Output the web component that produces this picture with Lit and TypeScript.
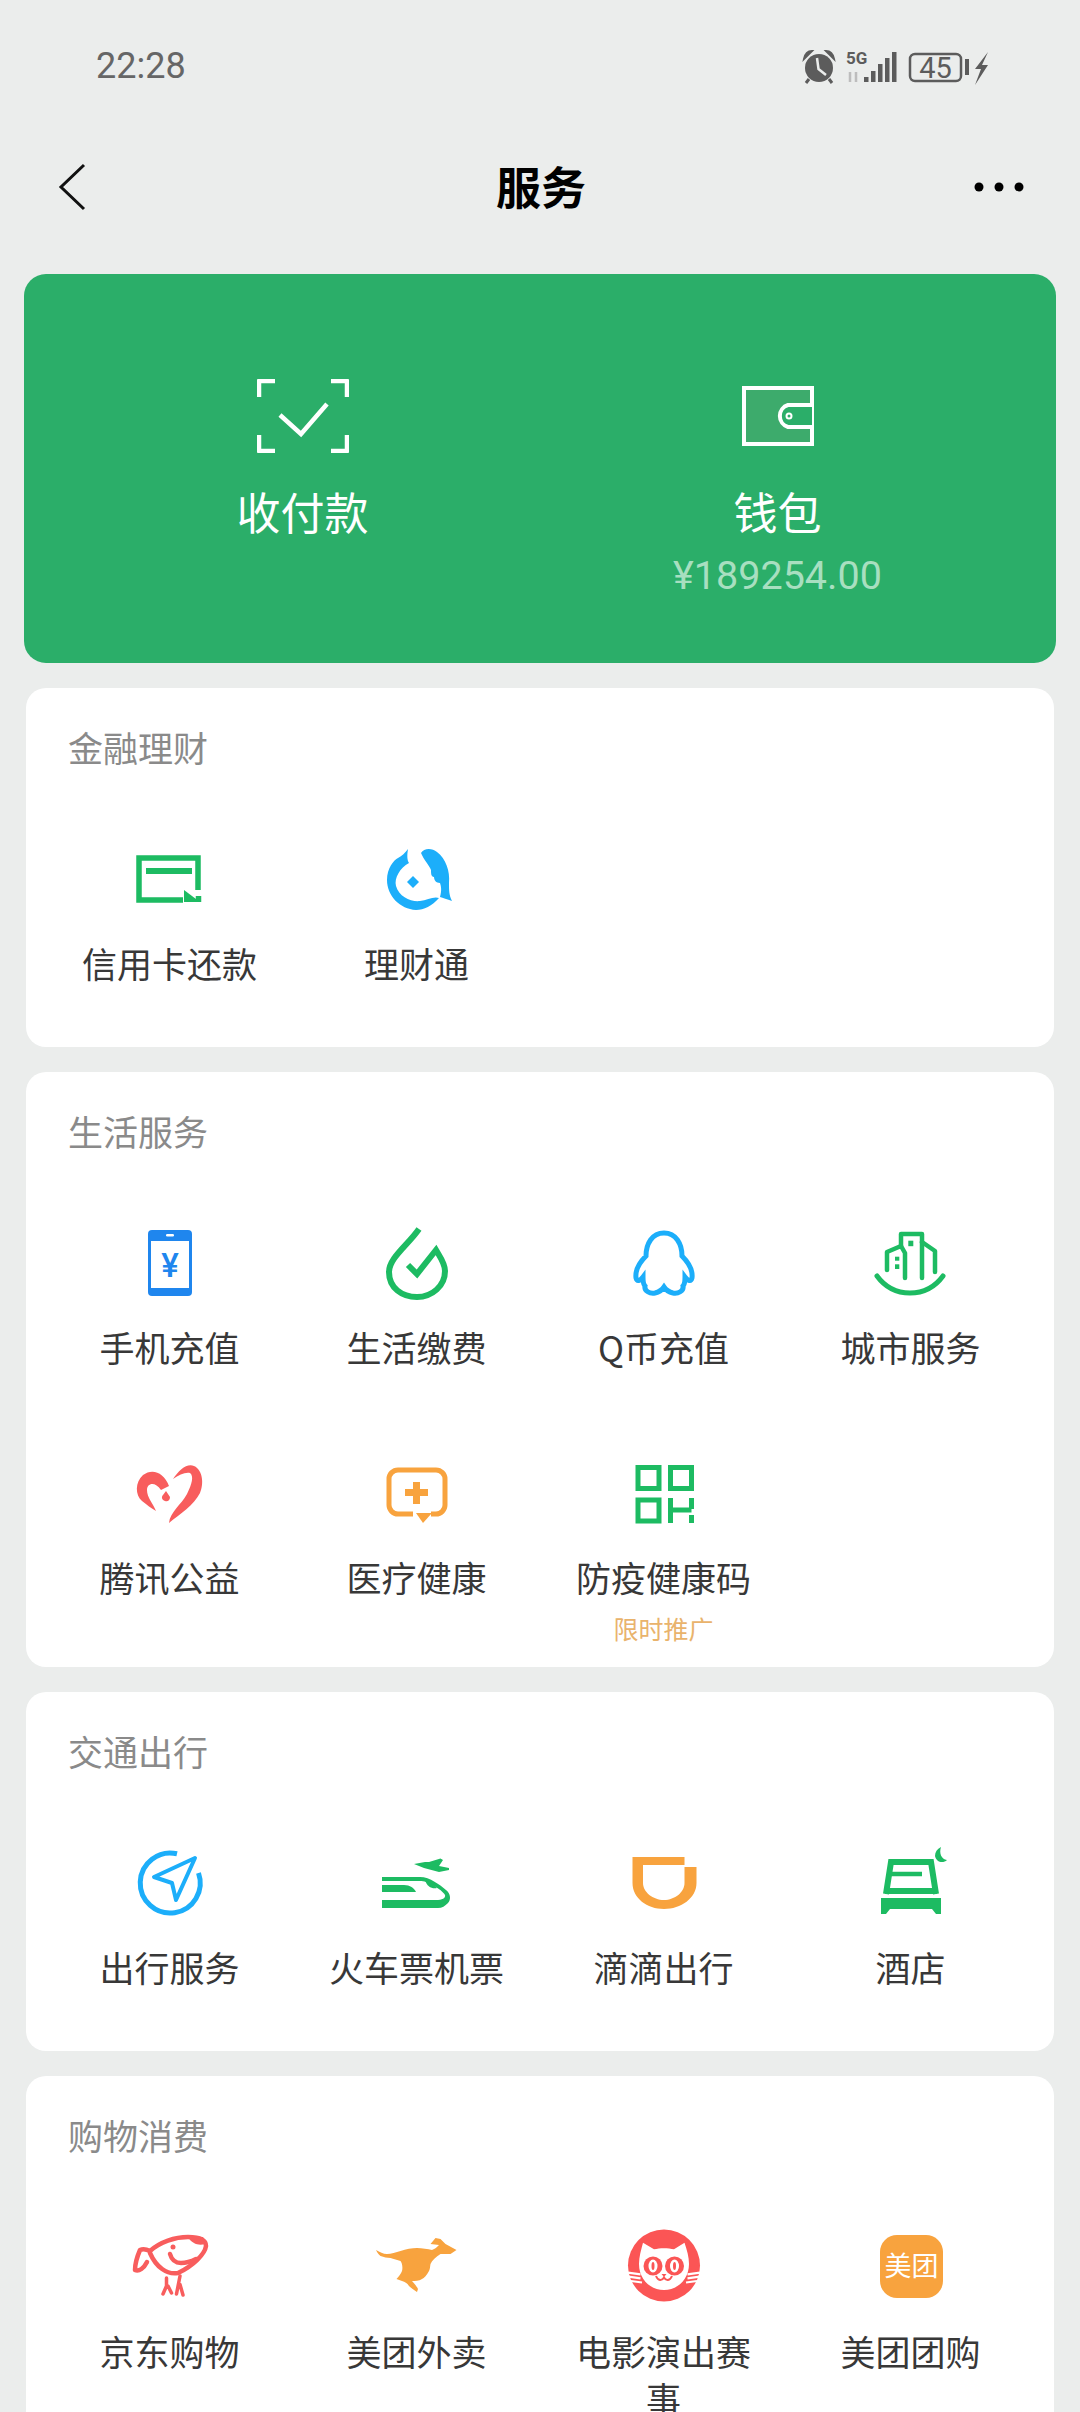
import { LitElement, html, svg, css, TemplateResult, SVGTemplateResult } from "lit";
import { customElement } from "lit/decorators.js";

const GREEN = "#1dbb62";
const BLUE = "#1caefa";
const ORANGE = "#f8a33e";
const RED = "#f85d5d";

// Every service icon is drawn on a 90x90 box, centred above its label
const box = (body: SVGTemplateResult) =>
  html`<svg class="icon" viewBox="0 0 90 90" width="90" height="90">${body}</svg>`;

const icons: Record<string, TemplateResult> = {
  card: box(svg`
    <g fill="none" stroke=${GREEN} stroke-width="5.5">
      <path d="M73 56V24H14V66H58" />
      <path d="M21 37H67" stroke-width="6" />
      <path d="M73.5 62V68" />
    </g>
    <path d="M59 56L75 68H59Z" fill=${GREEN} />
  `),
  fund: box(svg`
    <g fill=${BLUE} transform="translate(2 0)">
      <path d="M47 19C50 14 58 14 63 18C72 25 76 37 75 49C75 56 75 61 78 67C73 65 69 64 66 63C68 56 67 52 66 49C62 49 60 46 60 43C57 43 57 39 57 36C55 31 50 26 47 19Z" />
      <path d="M34 15C33 21 33 26 35 29C26 34 20 44 22 52C25 63 37 68 46 67C53 66 60 62 65 64C58 72 50 76 42 76C26 75 13 62 13 46C13 34 20 26 24 24C28 22 31 19 34 15Z" />
      <path d="M39 42L45 48L39 54L33 48Z" />
    </g>
  `),
  phone: box(svg`
    <rect x="23" y="12" width="44" height="66" rx="4" fill="#1f86ee" />
    <rect x="26" y="23" width="38" height="47" fill="#fff" />
    <rect x="41" y="16" width="8" height="2.5" rx="1.2" fill="#fff" />
    <text x="45" y="59" text-anchor="middle" class="yen">¥</text>
  `),
  bill: box(svg`
    <path
      d="M47 11C36 27 17 40 17 54C17 70 30 79 45 79C60 79 73 68 73 53C73 45 68 39 64 32L45 56L36 47"
      fill="none"
      stroke=${GREEN}
      stroke-width="6"
    />
  `),
  qq: box(svg`
    <path
      d="M45 15C33 15 27 26 27 38C21 44 16 52 17 60C18 64 21 63 24 59C24 64 25 67 26 68C25 73 31 76 36 75C40 74 43 72 45 69C47 72 50 74 54 75C59 76 65 73 64 68C65 67 66 64 66 59C69 63 72 64 73 60C74 52 69 44 63 38C63 26 57 15 45 15Z"
      fill="none"
      stroke=${BLUE}
      stroke-width="5"
    />
  `),
  city: box(svg`
    <g fill="none" stroke=${GREEN} stroke-width="4.5" stroke-linejoin="round" stroke-linecap="round">
      <path d="M11 58C19 69 31 75 44 75C57 75 69 69 77 58" stroke-width="5" />
      <path d="M21 52V34L35 28L39 35V60" />
      <path d="M35 28V16H56V60" />
      <path d="M56 24L69 33V54" />
    </g>
    <g fill=${GREEN}>
      <rect x="42.3" y="22.7" width="5" height="5.5" />
      <rect x="29" y="38.7" width="4.3" height="4" />
      <rect x="29" y="46.3" width="4.3" height="4.7" />
    </g>
  `),
  heart: box(svg`
    <g fill=${RED}>
      <path d="M48 31C54 22 62 15 69 18C78 22 79 36 75 45C69 57 55 66 44 75C45 64 56 57 62 46C67 36 69 28 65 25C60 24 54 27 48 31Z" />
      <path d="M44 38C39 24 27 20 18 27C10 34 10 47 17 53C22 57 26 60 31 63C28 55 22 50 22 42C22 35 30 33 36 42Z" />
      <path d="M41 43L45 49C45 53 42 54 40 53C37 52 36 49 38 47Z" />
    </g>
  `),
  medical: box(svg`
    <path
      d="M41 66H26A9 9 0 0 1 17 57V31A9 9 0 0 1 26 22H64A9 9 0 0 1 73 31V57A9 9 0 0 1 64 66H59"
      fill="none"
      stroke=${ORANGE}
      stroke-width="5"
    />
    <path d="M44 65H60L51 75Z" fill=${ORANGE} />
    <path d="M41 34H48V41H56V48H48V56H41V48H33V41H41Z" fill=${ORANGE} />
  `),
  qr: box(svg`
    <g fill="none" stroke=${GREEN} stroke-width="5">
      <rect x="19" y="19.5" width="21" height="21" />
      <rect x="51.5" y="19.5" width="21" height="21" />
      <rect x="19" y="52" width="21" height="21" />
      <path d="M51.5 50V75M51.5 62H72.5M72.5 50V61M72.5 67V75" />
    </g>
  `),
  travel: box(svg`
    <path
      d="M52 15.8A30 30 0 1 0 73.5 35"
      fill="none"
      stroke=${BLUE}
      stroke-width="5"
    />
    <path
      d="M70 20L29 39L47 45L51 62Z"
      fill="none"
      stroke=${BLUE}
      stroke-width="4"
      stroke-linejoin="round"
    />
  `),
  train: box(svg`
    <g fill=${GREEN}>
      <path d="M42 26L53 24L57 24L68.5 20.5L71 22L67 28L77 30L77 32L67 34L52 30Z" />
      <path d="M10 39H48C58 39 68 47 74 52C79 56 79 62 76 65C73 68 70 70 66 70H10V62H64C70 62 74 60 73 57C72 54 62 47 54 44C52 43 50 43 48 43H10Z" />
      <path d="M53 42C58 44 62 47 65 50C60 51 55 49 53 42Z" />
      <path d="M10 47H32C38 47 42 50 44 54H10Z" />
    </g>
  `),
  didi: box(svg`
    <path
      d="M13.5 19H65.5V27H24V45C24 54 34 62 45 62C56 62 65.5 54 65.5 45V29H77.5V45C77.5 60 62 71 45 71C28 71 13.5 60 13.5 45Z"
      fill=${ORANGE}
    />
  `),
  hotel: box(svg`
    <g fill="none" stroke=${GREEN} stroke-width="6">
      <path d="M20 56L25 24H65L70 56" />
      <path d="M24 36H56" stroke-width="4.5" />
      <path d="M19 53H71" />
    </g>
    <path d="M15 60H75V76H70L66 71H24L20 76H15Z" fill=${GREEN} />
    <path d="M75 9C73 15 75 21 81 22C77 26 70 24 69 18C69 14 71 11 75 9Z" fill=${GREEN} />
  `),
  jd: box(svg`
    <g fill="none" stroke=${RED} stroke-width="4.5" stroke-linecap="round" stroke-linejoin="round">
      <path d="M25 29C35 20 50 15 63 15C73 15 81 17 81 24C80 32 68 44 53 51C42 53 31 45 25 31Z" />
      <path d="M25 29C21 27 17 27 15 28C12 35 10 42 10 48C14 50 19 46 22 40" />
      <path d="M45 32C47 39 52 41 56 41C62 41 67 39 71 37" />
      <path d="M41.5 56V64L38 72M43 64L46.5 71M55 54L51.5 72M55 62.5L58 73" stroke-width="3.5" />
    </g>
    <path d="M63 15H78L80 22C74 24 67 22 63 15Z" fill=${RED} />
    <circle cx="48" cy="25" r="2.5" fill=${RED} />
  `),
  kangaroo: box(svg`
    <path
      d="M4 28C8 30 11 32 15 32C19 32 24 30 28.5 29C34 27 40 26 45 26C50 26 56 27 60 28C63 27 65 25 67 23L58.5 22L63.5 16L68.5 17L73.5 22L84.5 28L78.5 32H68.5C64 35 60 38 58.5 42C58 45 58 47 57 49C55 53 52 56 50 57C47 59 43 59 40 59C43 62 45 65 46 67L45 70C42 68 39 66 37 64C35 61 33 60 30 59L24.5 57C27 54 29 52 30 49C31 45 30 41 28.5 39C25 38 22 37 18.5 36C15 36 12 35 8.5 34C6 32 5 30 4 28Z"
      fill=${ORANGE}
    />
  `),
  cat: box(svg`
    <circle cx="45" cy="43.5" r="36" fill="#fb5555" />
    <path
      d="M24 20.7L35 27.3C41 25.8 49 25.8 55 27.3L65.5 20.7C68 28 70 35 70 42C70 57 59 68 45 68C31 68 20 57 20 42C20 35 22 28 24 20.7Z"
      fill="#fff"
    />
    <g fill="#fb5555">
      <circle cx="34" cy="44" r="9.5" />
      <circle cx="55.5" cy="44" r="9.5" />
    </g>
    <g fill="#fff">
      <ellipse cx="34" cy="44" rx="4.5" ry="6.5" />
      <ellipse cx="55.5" cy="44" rx="4.5" ry="6.5" />
    </g>
    <g fill="#fb5555">
      <ellipse cx="34" cy="44" rx="1.5" ry="4" />
      <ellipse cx="55.5" cy="44" rx="1.5" ry="4" />
      <path d="M42.5 52H47.5L45 55Z" />
    </g>
    <path d="M37 54C39 59 43 59 45 55.5C47 59 51 59 53 54" fill="none" stroke="#fb5555" stroke-width="2" />
    <g stroke="#fff" stroke-width="2.2">
      <path d="M9 50.7L21.5 52.3M9.5 54.7L21.5 56.3M12 59L23 60.5M81 50.7L68.5 52.3M80.5 54.7L68.5 56.3M78 59L67 60.5" />
    </g>
  `),
  meituan: box(svg`
    <rect x="14" y="13" width="63" height="63" rx="17" fill=${ORANGE} />
    <text x="45.5" y="54" text-anchor="middle" class="logo">美团</text>
  `),
};

interface Service {
  name: string;
  icon: string;
  note?: string;
}

const sections: { title: string; items: Service[] }[] = [
  {
    title: "金融理财",
    items: [
      { name: "信用卡还款", icon: "card" },
      { name: "理财通", icon: "fund" },
    ],
  },
  {
    title: "生活服务",
    items: [
      { name: "手机充值", icon: "phone" },
      { name: "生活缴费", icon: "bill" },
      { name: "Q币充值", icon: "qq" },
      { name: "城市服务", icon: "city" },
      { name: "腾讯公益", icon: "heart" },
      { name: "医疗健康", icon: "medical" },
      { name: "防疫健康码", icon: "qr", note: "限时推广" },
    ],
  },
  {
    title: "交通出行",
    items: [
      { name: "出行服务", icon: "travel" },
      { name: "火车票机票", icon: "train" },
      { name: "滴滴出行", icon: "didi" },
      { name: "酒店", icon: "hotel" },
    ],
  },
  {
    title: "购物消费",
    items: [
      { name: "京东购物", icon: "jd" },
      { name: "美团外卖", icon: "kangaroo" },
      { name: "电影演出赛事", icon: "cat" },
      { name: "美团团购", icon: "meituan" },
    ],
  },
];

@customElement("app-root")
export class AppRoot extends LitElement {
  static override styles = css`
    :host {
      display: block;
      height: 2412px;
      overflow: hidden;
      background: #ebedec;
      font-family: "Noto Sans CJK SC", "Noto Sans", sans-serif;
    }
    svg {
      display: block;
    }
    .status {
      height: 132px;
      padding: 0 80px 0 96px;
      display: flex;
      justify-content: space-between;
      align-items: center;
    }
    .time {
      font-family: Roboto, sans-serif;
      font-size: 36px;
      color: #666;
    }
    .status-text {
      font-family: Roboto, sans-serif;
      fill: #5c5c5c;
    }
    .nav {
      height: 106px;
      padding: 0 56px 4px 58px;
      display: grid;
      grid-template-columns: 1fr auto 1fr;
      align-items: center;
      margin-bottom: 32px;
    }
    .nav h1 {
      margin: 0;
      font-size: 45px;
      font-weight: 700;
      color: #000;
    }
    .back,
    .more {
      position: relative;
      top: 2px;
    }
    .more {
      justify-self: end;
    }
    .hero {
      height: 389px;
      margin: 0 24px;
      padding: 94px 41px 0;
      box-sizing: border-box;
      background: #2bae69;
      border-radius: 22px;
      display: grid;
      grid-template-columns: 1fr 1fr;
      color: #fff;
    }
    .hero-col {
      display: flex;
      flex-direction: column;
      align-items: center;
    }
    .hero-icon {
      height: 96px;
      display: flex;
      align-items: center;
    }
    .hero-label {
      margin-top: 17px;
      font-size: 44px;
      line-height: 60px;
    }
    .amount {
      margin-top: 10px;
      font-family: Roboto, sans-serif;
      font-size: 39.5px;
      line-height: 50px;
      color: #a8dfc0;
    }
    .card {
      margin: 25px 26px 0;
      padding: 38px 20px 19px;
      background: #fff;
      border-radius: 20px;
    }
    .card h2 {
      margin: 0 0 0 22px;
      font-size: 35px;
      line-height: 42px;
      font-weight: 400;
      color: #8a8a8a;
    }
    .grid {
      margin-top: 66px;
      display: grid;
      grid-template-columns: repeat(4, 247px);
      row-gap: 36px;
    }
    .item {
      min-height: 194px;
      display: flex;
      flex-direction: column;
      align-items: center;
    }
    .label {
      margin-top: 15px;
      max-width: 199px;
      font-size: 35px;
      line-height: 47px;
      text-align: center;
      color: #383838;
    }
    .note {
      margin: 13px 0 5px;
      font-size: 25px;
      line-height: 30px;
      color: #e9b36c;
    }
    .yen {
      font-family: Roboto, sans-serif;
      font-size: 33px;
      font-weight: 500;
      fill: #1f86ee;
    }
    .logo {
      font-family: "Noto Sans CJK SC", sans-serif;
      font-size: 27px;
      fill: #fff;
    }
  `;

  private renderStatus() {
    return html`
      <div class="status">
        <span class="time">22:28</span>
        <svg width="204" height="40" viewBox="0 0 204 40">
          <g fill="#5c5c5c">
            <circle cx="23" cy="22" r="14" />
            <path d="M8 13C9 8 12 5 16 5L8 13ZM38 13C37 8 34 5 30 5L38 13Z" stroke="#5c5c5c" stroke-width="2" />
            <path d="M13 33L10 37M33 33L36 37" stroke="#5c5c5c" stroke-width="3" />
            <path d="M21 12L22.5 23L30 29" fill="none" stroke="#ebedec" stroke-width="2.5" />
          </g>
          <text x="50" y="18" class="status-text" font-size="17" font-weight="700">5G</text>
          <path d="M54 26V36M60 26V36" stroke="#bdbdbd" stroke-width="2.5" />
          <g fill="#5c5c5c">
            <rect x="68" y="31" width="4.5" height="5" />
            <rect x="75" y="25" width="4.5" height="11" />
            <rect x="82" y="18" width="4.5" height="18" />
            <rect x="89" y="12" width="4.5" height="24" />
            <rect x="96" y="6" width="4.5" height="30" />
          </g>
          <rect x="114" y="8" width="51" height="27" rx="5" fill="none" stroke="#5c5c5c" stroke-width="2.5" />
          <text x="139.5" y="32" text-anchor="middle" class="status-text" font-size="29">45</text>
          <rect x="169" y="13" width="4" height="16" fill="#5c5c5c" />
          <path d="M192 6L179 23H185L179 39L192 19H186Z" fill="#5c5c5c" />
        </svg>
      </div>
    `;
  }

  private renderNav() {
    return html`
      <div class="nav">
        <svg class="back" width="30" height="50" viewBox="0 0 30 50">
          <path d="M26 3L3 25L26 47" fill="none" stroke="#111" stroke-width="3" />
        </svg>
        <h1>服务</h1>
        <svg class="more" width="50" height="10" viewBox="0 0 50 10">
          <circle cx="5" cy="5" r="4.5" />
          <circle cx="25" cy="5" r="4.5" />
          <circle cx="45" cy="5" r="4.5" />
        </svg>
      </div>
    `;
  }

  private renderHero() {
    return html`
      <div class="hero">
        <div class="hero-col">
          <div class="hero-icon">
            <svg width="92" height="74" viewBox="0 0 92 74" fill="none" stroke="#fff" stroke-width="4.5">
              <path d="M2 18V2H18M74 2H90V18M2 56V72H18M74 72H90V56" stroke-linejoin="round" />
              <path d="M23 36L44 55L70 25" />
            </svg>
          </div>
          <div class="hero-label">收付款</div>
        </div>
        <div class="hero-col">
          <div class="hero-icon">
            <svg width="72" height="60" viewBox="0 0 72 60" fill="none" stroke="#fff" stroke-width="4">
              <rect x="2" y="2" width="68" height="56" fill="#3dab6c" />
              <path d="M70 19H46A11.5 11.5 0 0 0 46 41H70" fill="#2bae69" />
              <circle cx="47" cy="30" r="2.5" stroke-width="2" />
            </svg>
          </div>
          <div class="hero-label">钱包</div>
          <div class="amount">¥189254.00</div>
        </div>
      </div>
    `;
  }

  override render(): TemplateResult {
    return html`
      ${this.renderStatus()} ${this.renderNav()} ${this.renderHero()}
      ${sections.map(
        (s) => html`
          <section class="card">
            <h2>${s.title}</h2>
            <div class="grid">
              ${s.items.map(
                (i) => html`
                  <div class="item">
                    ${icons[i.icon]}
                    <div class="label">${i.name}</div>
                    ${i.note ? html`<div class="note">${i.note}</div>` : ""}
                  </div>
                `
              )}
            </div>
          </section>
        `
      )}
    `;
  }
}
